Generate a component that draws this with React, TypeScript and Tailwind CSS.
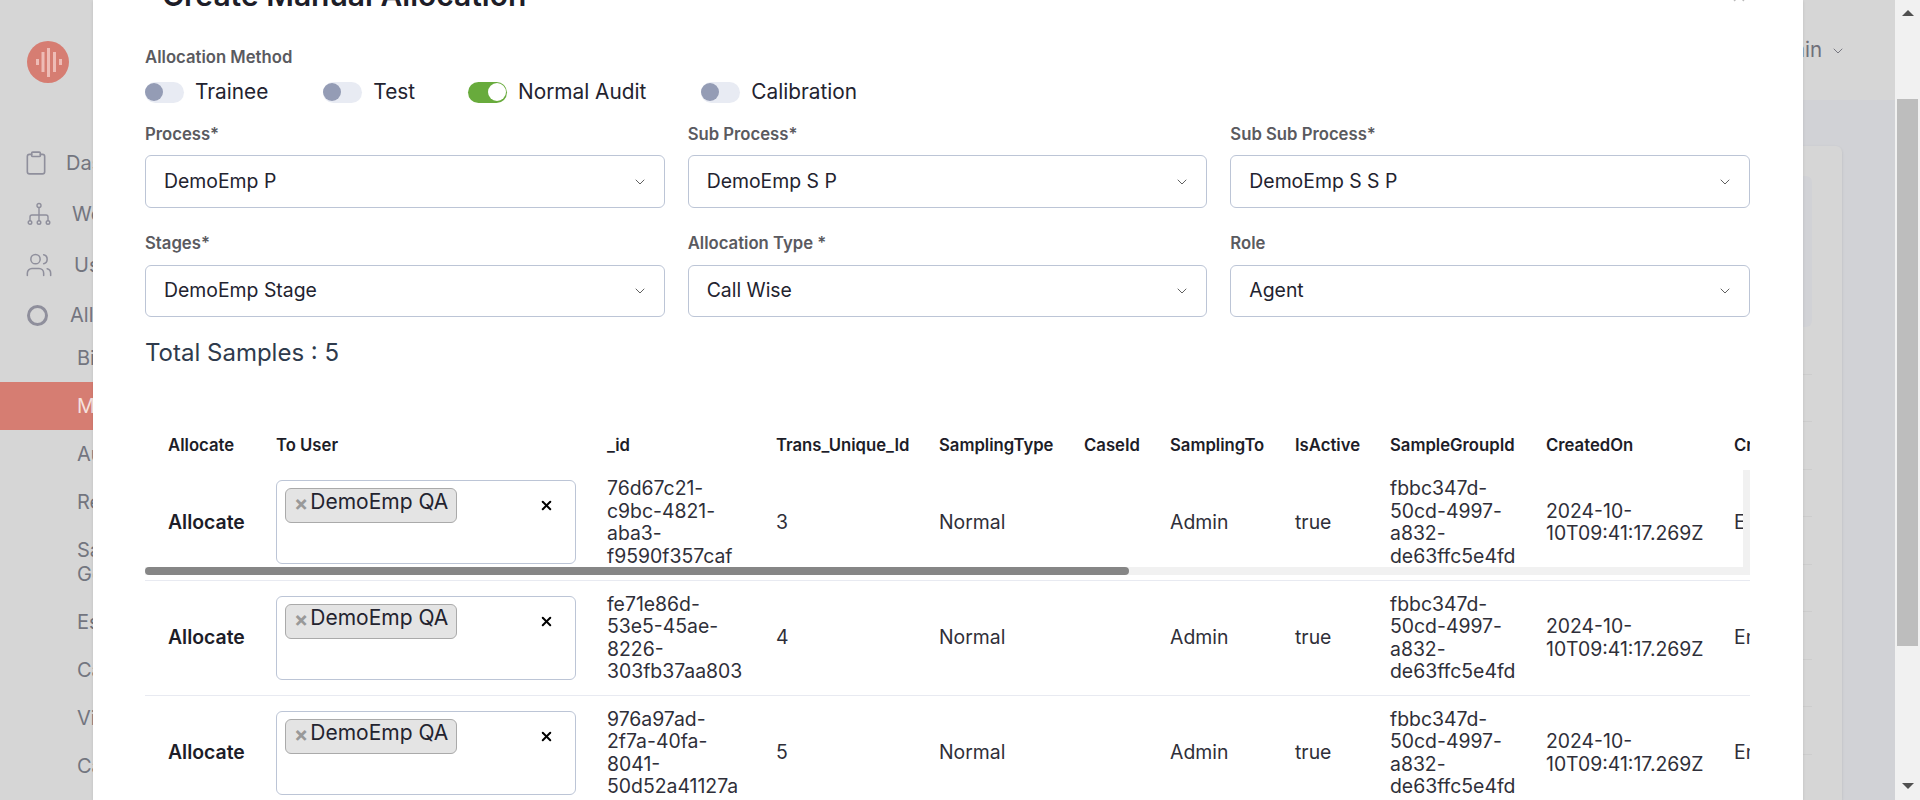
import { ChevronDown, Clipboard, Users, X } from 'lucide-react'

const sideTop = [
  { label: 'Dashboard', row: 'h-[51px] pl-[23px] gap-[17px]', icon: <Clipboard size={26} strokeWidth={1.5} /> },
  { label: 'Workflow', row: 'h-[51px] pl-[27px] gap-[21px]', icon: <OrgIcon /> },
  { label: 'Users', row: 'h-[51px] pl-[25px] gap-[21px]', icon: <Users size={28} strokeWidth={1.3} /> },
  { label: 'Allocation', row: 'h-[50px] pl-[27px] gap-[22px]', icon: <div className="w-[21px] h-[21px] rounded-full border-[3px] border-[#8f8f9c]" /> },
]

const sideSub = ['Bidding', 'Manual', 'Auto', 'Reallocation', 'Sampling Generation', 'Escalation', 'Calibration', 'View', 'Case']

const headers = ['Allocate', 'To User', '_id', 'Trans_Unique_Id', 'SamplingType', 'CaseId', 'SamplingTo', 'IsActive', 'SampleGroupId', 'CreatedOn', 'CreatedBy']

const rows = [
  { id: '76d67c21-c9bc-4821-aba3-f9590f357caf', n: 3 },
  { id: 'fe71e86d-53e5-45ae-8226-303fb37aa803', n: 4 },
  { id: '976a97ad-2f7a-40fa-8041-50d52a41127a', n: 5 },
]

function OrgIcon() {
  return (
    <svg width="24" height="24" viewBox="0 0 24 24" fill="none" stroke="#8f8f9c" strokeWidth="1.4">
      <circle cx="12" cy="3.5" r="2" />
      <path d="M12 5.5V19M3 19v-4q0-2 2-2h14q2 0 2 2v4" />
      <circle cx="3" cy="20.5" r="1.8" />
      <circle cx="12" cy="20.5" r="1.8" />
      <circle cx="21" cy="20.5" r="1.8" />
    </svg>
  )
}

function Sidebar() {
  return (
    <div className="w-[290px] shrink-0 bg-[#d6d6d6] text-[#73757f] text-[20px]">
      <div className="pt-[41px] pl-[27px] h-[137px]">
        <svg width="42" height="42" viewBox="0 0 42 42">
          <circle cx="21" cy="21" r="21" fill="#d67d72" />
          <g fill="#eebcb6">
            <rect x="9" y="18" width="3" height="6" />
            <rect x="14.500" y="11" width="3" height="20" />
            <rect x="20" y="7" width="3" height="29" />
            <rect x="26" y="11" width="3" height="20" />
            <rect x="32" y="18" width="3" height="6" />
          </g>
        </svg>
      </div>
      {sideTop.map((item) => (
        <div key={item.label} className={`flex items-center text-[#8f8f9c] ${item.row}`}>
          {item.icon}
          <span className="text-[#73757f] text-[20px]">{item.label}</span>
        </div>
      ))}
      <div className="-mt-[6px]">
        {sideSub.map((s) => (
          <div
            key={s}
            className={`pl-[77px] flex items-center leading-[24px] ${s === 'Sampling Generation' ? 'h-[72px] w-[190px]' : 'h-[48px]'} ${s === 'Manual' ? 'bg-[#d67d72] text-[#f5e1de]' : ''}`}
          >
            {s}
          </div>
        ))}
      </div>
    </div>
  )
}

function Backdrop() {
  return (
    <div className="flex-1 flex flex-col">
      <div className="h-[100px] bg-[#d6d6d6] pt-[1px] flex items-center justify-end pr-[49px] gap-[8px] text-[#70707a] text-[20.500px]">
        Admin
        <ChevronDown size={16} strokeWidth={1.4} />
      </div>
      <div className="flex-1 bg-[#d1d2d6] flex justify-end pr-[53px] pt-[46px]">
        <div className="w-[400px] bg-[#d6d6d6] rounded-t-[6px] pr-[30px] pt-[30px] shadow-sm">
          <div className="h-[151px] bg-[#d1d2d6] rounded-[6px]" />
          {[0, 1, 2, 3, 4, 5, 6, 7, 8].map((i) => (
            <div key={i} className="h-[47.500px] border-b border-[#cdcdcd] first:h-[58px]" />
          ))}
        </div>
      </div>
    </div>
  )
}

function Toggle({ label, on, className }: { label: string; on?: boolean; className?: string }) {
  return (
    <div className={`flex items-center gap-[11px] ${className ?? ''}`}>
      <div className={`w-[39px] h-[21px] rounded-full flex items-center ${on ? 'bg-[#68ab3c] justify-end pr-[1px]' : 'bg-[#e8ebf3]'}`}>
        <div className={`w-[18px] h-[18px] rounded-full ${on ? 'bg-white' : 'bg-[#949cb5]'}`} />
      </div>
      <span className="text-[20.800px] text-[#23232f] leading-[24px]">{label}</span>
    </div>
  )
}

function Field({ label, value, tall }: { label: string; value: string; tall?: boolean }) {
  return (
    <div>
      <div className={`text-[16.700px] font-semibold text-[#5a5a5f] leading-[20px] ${tall ? 'mb-[11px]' : 'mb-[12px]'}`}>{label}</div>
      <div className={`${tall ? 'h-[53px]' : 'h-[52px]'} border border-[#bcc5d6] rounded-[6px] pl-[18px] pr-[16px] flex items-center justify-between`}>
        <span className="text-[19.400px] text-[#23232f]">{value}</span>
        <ChevronDown size={16} strokeWidth={1.4} className="text-[#555]" />
      </div>
    </div>
  )
}

function UserPicker() {
  return (
    <div className="w-[300px] h-[84px] border border-[#bcc5d6] rounded-[6px] pl-[8px] pt-[7px] flex items-start">
      <div className="w-[172px] h-[35px] bg-[#e4e4e4] border border-[#aaaaaa] rounded-[6px] flex items-start pl-[8px] gap-[2px] shrink-0">
        <span className="text-[#999] font-bold text-[21px] leading-[30px]">×</span>
        <span className="text-[21px] text-[#23232f] leading-[26px] whitespace-nowrap">DemoEmp QA</span>
      </div>
      <X size={15} strokeWidth={3.2} className="ml-[82px] mt-[10px] text-black" />
    </div>
  )
}

function ModalTable() {
  return (
    <div className="relative mt-[58px] w-[1605px] h-[375px] overflow-hidden">
      <table className="table-fixed w-[1766px] border-collapse text-[19.400px] text-[#2f2f39] leading-[22.500px]">
        <colgroup>
          <col className="w-[108px]" />
          <col className="w-[331px]" />
          <col className="w-[169px]" />
          <col className="w-[163px]" />
          <col className="w-[145px]" />
          <col className="w-[86px]" />
          <col className="w-[125px]" />
          <col className="w-[95px]" />
          <col className="w-[156px]" />
          <col className="w-[188px]" />
          <col className="w-[200px]" />
        </colgroup>
        <thead>
          <tr className="h-[40px]">
            {headers.map((h) => (
              <th key={h} className="pl-[23px] text-left text-[16.700px] font-semibold text-[#1d1d28] align-middle whitespace-nowrap">{h}</th>
            ))}
          </tr>
        </thead>
        <tbody>
          {rows.map((r) => (
            <tr key={r.n} className="h-[115px] border-b border-[#e8eaf1]">
              <td className="pl-[23px] font-semibold text-[#1d1d28]">Allocate</td>
              <td className="pl-[23px]"><UserPicker /></td>
              <td className="pl-[23px] pr-[8px]">{r.id}</td>
              <td className="pl-[23px]">{r.n}</td>
              <td className="pl-[23px]">Normal</td>
              <td className="pl-[23px]" />
              <td className="pl-[23px]">Admin</td>
              <td className="pl-[23px]">true</td>
              <td className="pl-[23px] pr-[8px]">fbbc347d-50cd-4997-a832-de63ffc5e4fd</td>
              <td className="pl-[23px] pr-[8px]">2024-10-10T09:41:17.269Z</td>
              <td className="pl-[23px]">Employee</td>
            </tr>
          ))}
        </tbody>
      </table>
      {/* first row has its own scrollbars in the original */}
      <div className="absolute left-0 top-[142px] w-[1605px] h-[8px] bg-[#f1f1f1]">
        <div className="w-[984px] h-full bg-[#868686] rounded-full" />
      </div>
      <div className="absolute right-0 top-[45px] w-[7px] h-[97px] bg-[#f1f1f1]" />
    </div>
  )
}

function Modal() {
  return (
    <div className="absolute top-0 left-[93px] w-[1710px] h-[800px] bg-white overflow-hidden pl-[52px] shadow-sm">
      <div className="flex justify-between w-[1605px] -mt-[22px] h-[69px]">
        <div className="text-[30px] font-semibold text-[#1d1d28] pl-[17px] leading-[34px]">Create Manual Allocation</div>
        <X size={18} className="text-[#bbb] mr-[2px] mt-[9px]" />
      </div>
      <div className="text-[16.700px] font-semibold text-[#5a5a5f] leading-[20px] mb-[13px]">Allocation Method</div>
      <div className="flex gap-[55px] h-[24px] items-center">
        <Toggle label="Trainee" />
        <Toggle label="Test" className="-mr-[2px]" />
        <Toggle label="Normal Audit" on />
        <Toggle label="Calibration" />
      </div>
      <div className="grid grid-cols-3 gap-x-[23px] w-[1605px] mt-[20px]">
        <Field label="Process*" value="DemoEmp P" tall />
        <Field label="Sub Process*" value="DemoEmp S P" tall />
        <Field label="Sub Sub Process*" value="DemoEmp S S P" tall />
      </div>
      <div className="grid grid-cols-3 gap-x-[23px] w-[1605px] mt-[25px]">
        <Field label="Stages*" value="DemoEmp Stage" />
        <Field label="Allocation Type *" value="Call Wise" />
        <Field label="Role" value="Agent" />
      </div>
      <div className="text-[24px] text-[#2f3b4d] leading-[28px] mt-[22px]">Total Samples : 5</div>
      <ModalTable />
    </div>
  )
}

export default function App() {
  return (
    <div className="h-[800px] w-[1920px] overflow-hidden flex [font-family:Inter,sans-serif]">
      <div className="relative w-[1895px] h-full flex">
        <Sidebar />
        <Backdrop />
        <Modal />
      </div>
      <div className="w-[25px] h-full bg-[#f1f1f1] flex flex-col items-center">
        <div className="h-[99px] pt-[10px] shrink-0">
          <div className="w-0 h-0 border-x-[6px] border-x-transparent border-b-[6px] border-b-[#505050]" />
        </div>
        <div className="w-[21px] h-[547px] bg-[#bdbdbd] shrink-0" />
        <div className="flex-1 flex items-end pb-[11px]">
          <div className="w-0 h-0 border-x-[6px] border-x-transparent border-t-[6px] border-t-[#505050]" />
        </div>
      </div>
    </div>
  )
}
